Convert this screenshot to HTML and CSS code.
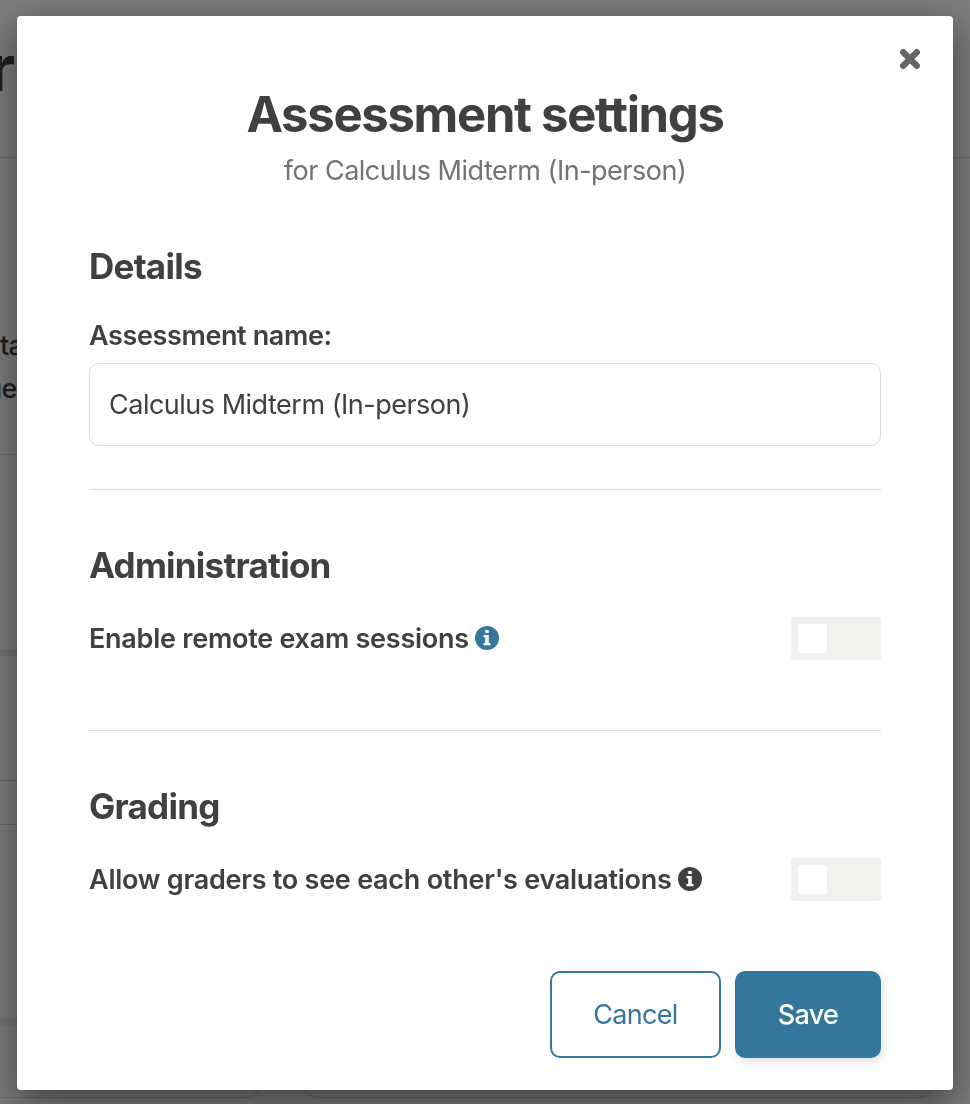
FILE: index.html
```html
<!DOCTYPE html>
<html lang="en">
<head>
    <meta charset="UTF-8">
    <meta name="viewport" content="width=device-width, initial-scale=1.0">
    <title>Assessment settings</title>
    <link rel="stylesheet" href="styles.css">
</head>
<body>
    <div class="page">
        <div class="page-header">r</div>
        <div class="page-intro">
            <p>ta</p>
            <p class="shifted">ue</p>
        </div>
        <div class="page-block"></div>
        <div class="page-table">
            <div class="table-top"></div>
            <div class="table-row"></div>
        </div>
        <div class="page-cards">
            <div class="card card-first"></div>
            <div class="card"></div>
        </div>
    </div>

    <div class="overlay">
        <div class="modal">
            <button class="close" aria-label="Close">
                <svg width="22" height="22" viewBox="0 0 22 22">
                    <path d="M4.2 4.2L17.8 17.8M17.8 4.2L4.2 17.8" stroke="#666" stroke-width="6.4" stroke-linecap="round"/>
                </svg>
            </button>

            <div class="modal-header">
                <h1>Assessment settings</h1>
                <p>for Calculus Midterm (In-person)</p>
            </div>

            <section class="details">
                <h2>Details</h2>
                <label for="assessmentName">Assessment name:</label>
                <input type="text" id="assessmentName" value="Calculus Midterm (In-person)">
            </section>

            <section class="administration">
                <h2>Administration</h2>
                <div class="setting">
                    <span class="setting-label">Enable remote exam sessions</span>
                    <svg class="info blue" width="24" height="24" viewBox="0 0 24 24">
                        <circle cx="12" cy="12" r="12"/>
                        <path d="M10.3 4h3.400v3h-3.400zM8.500 9H13.800v8H15.500V19.300H8.500V17H10.200V11.300H8.500z" fill="#fff"/>
                    </svg>
                    <div class="toggle"><div class="knob"></div></div>
                </div>
            </section>

            <section class="grading">
                <h2>Grading</h2>
                <div class="setting">
                    <span class="setting-label">Allow graders to see each other's evaluations</span>
                    <svg class="info" width="24" height="24" viewBox="0 0 24 24">
                        <circle cx="12" cy="12" r="12"/>
                        <path d="M10.3 4h3.400v3h-3.400zM8.500 9H13.800v8H15.500V19.300H8.500V17H10.200V11.300H8.500z" fill="#fff"/>
                    </svg>
                    <div class="toggle"><div class="knob"></div></div>
                </div>
            </section>

            <div class="buttons">
                <button class="btn cancel">Cancel</button>
                <button class="btn save">Save</button>
            </div>
        </div>
    </div>
</body>
</html>
```
FILE: styles.css
```css
* {
    margin: 0;
    padding: 0;
    box-sizing: border-box;
}

body {
    font-family: Inter, 'Liberation Sans', sans-serif;
    color: #404040;
    height: 1104px;
    overflow: hidden;
}

/* page behind the modal */
.page {
    height: 1104px;
    overflow: hidden;
    background: #f9f9f9;
}

.page-header {
    height: 158px;
    padding-top: 29px;
    border-bottom: 1px solid #d6d6d6;
    font-size: 64px;
    font-weight: 700;
    line-height: 77px;
    text-indent: -11px;
}

.page-intro {
    height: 297px;
    width: 18px;
    padding-top: 166px;
    border-bottom: 1px solid #d6d6d6;
    font-size: 27px;
    font-weight: 450;
    line-height: 43px;
    letter-spacing: -0.8px;
}

.page-intro .shifted {
    text-indent: -14px;
}

.page-block {
    height: 201px;
    width: 18px;
    border-bottom: 7px solid #e8e8e3;
}

.page-table {
    height: 370px;
    width: 18px;
    border-bottom: 7px solid #e8e8e3;
}

.table-top {
    height: 125px;
    border-bottom: 1px solid #d0d0d0;
}

.table-row {
    height: 44px;
    border-bottom: 1px solid #d0d0d0;
}

.page-cards {
    display: flex;
    gap: 41px;
    height: 72px;
}

.card {
    width: 633px;
    border: 1px solid #d6d6d6;
    border-top: none;
    border-radius: 0 0 16px 16px;
}

.card-first {
    width: 261px;
    border-left: none;
    border-bottom-left-radius: 0;
}

.overlay {
    position: fixed;
    inset: 0;
    padding: 16px 17px;
    background: rgba(0, 0, 0, 0.5);
}

.modal {
    position: relative;
    width: 936px;
    height: 1074px;
    padding: 69px 72px 0;
    background: white;
    border-radius: 4px;
    box-shadow: 0 12px 36px rgba(0, 0, 0, 0.5);
}

.close {
    position: absolute;
    top: 32px;
    right: 32px;
    width: 22px;
    height: 22px;
    background: none;
    border: none;
    cursor: pointer;
}

.close svg {
    display: block;
}

.modal-header {
    height: 137px;
    text-align: center;
}

h1 {
    font-size: 49px;
    font-weight: 650;
    line-height: 60px;
    letter-spacing: -1.3px;
}

.modal-header p {
    margin-top: 9px;
    color: #737373;
    font-size: 27px;
    font-weight: 420;
    line-height: 34px;
    letter-spacing: -0.5px;
}

h2 {
    font-size: 35px;
    font-weight: 650;
    line-height: 44px;
    letter-spacing: -0.75px;
}

.details {
    height: 268px;
    padding-top: 22px;
    border-bottom: 1px solid #dcdcdc;
}

label {
    display: block;
    margin: 31px 0 10px;
    font-size: 27px;
    font-weight: 600;
    line-height: 34px;
    letter-spacing: -0.38px;
}

input {
    display: block;
    width: 100%;
    height: 83px;
    padding: 0 19px;
    border: 1px solid #dcdcdc;
    border-radius: 10px;
    font-family: inherit;
    font-size: 27px;
    font-weight: 420;
    letter-spacing: -0.5px;
    color: #404040;
    outline: none;
}

.administration {
    height: 241px;
    padding-top: 53px;
    border-bottom: 1px solid #dcdcdc;
}

.grading {
    height: 240px;
    padding-top: 53px;
}

.setting {
    display: flex;
    align-items: center;
    height: 43px;
    margin-top: 30px;
}

.setting-label {
    font-size: 27px;
    font-weight: 600;
    line-height: 34px;
    letter-spacing: -0.25px;
    white-space: nowrap;
}

.info {
    margin: -1px 0 0 6px;
    fill: #404040;
}

.info.blue {
    fill: #33779c;
}

.toggle {
    width: 90px;
    height: 43px;
    margin-left: auto;
    padding: 7px;
    background: #f1f2ed;
    border-radius: 3px;
}

.knob {
    width: 29px;
    height: 29px;
    background: white;
    border-radius: 2px;
}

.buttons {
    display: flex;
    justify-content: flex-end;
    gap: 14px;
}

.btn {
    height: 87px;
    border-radius: 10px;
    font-family: inherit;
    font-size: 27px;
    font-weight: 420;
    letter-spacing: -0.7px;
    cursor: pointer;
}

.cancel {
    width: 171px;
    background: white;
    border: 2px solid #33779c;
    color: #33779c;
}

.save {
    width: 146px;
    background: #33779c;
    border: none;
    color: white;
    font-weight: 450;
    box-shadow: 2px 4px 10px rgba(0, 0, 0, 0.12);
}
```
